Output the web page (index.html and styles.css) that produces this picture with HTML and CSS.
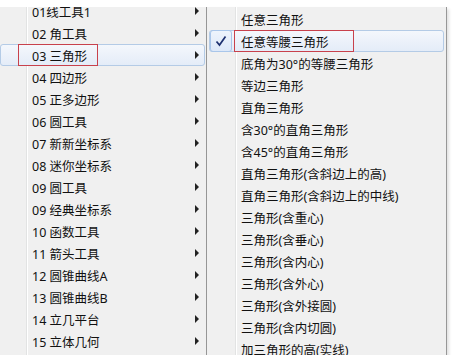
FILE: index.html
```html
<!DOCTYPE html>
<html lang="zh-CN">

<head>
    <meta charset="UTF-8">
    <meta name="viewport" content="width=device-width, initial-scale=1.0">
    <title>三角形菜单</title>
    <link rel="stylesheet" href="styles.css">
</head>

<body>
    <div class="screen">
        <div class="menu main-menu">
            <div class="item first"><span>01线工具1</span><i class="arrow"></i></div>
            <div class="item"><span>02 角工具</span><i class="arrow"></i></div>
            <div class="item active"><span>03 三角形</span><i class="arrow"></i><b class="mark mark-left"></b></div>
            <div class="item"><span>04 四边形</span><i class="arrow"></i></div>
            <div class="item"><span>05 正多边形</span><i class="arrow"></i></div>
            <div class="item"><span>06 圆工具</span><i class="arrow"></i></div>
            <div class="item"><span>07 新新坐标系</span><i class="arrow"></i></div>
            <div class="item"><span>08 迷你坐标系</span><i class="arrow"></i></div>
            <div class="item"><span>09 圆工具</span><i class="arrow"></i></div>
            <div class="item"><span>09 经典坐标系</span><i class="arrow"></i></div>
            <div class="item"><span>10 函数工具</span><i class="arrow"></i></div>
            <div class="item"><span>11 箭头工具</span><i class="arrow"></i></div>
            <div class="item"><span>12 圆锥曲线A</span><i class="arrow"></i></div>
            <div class="item"><span>13 圆锥曲线B</span><i class="arrow"></i></div>
            <div class="item"><span>14 立几平台</span><i class="arrow"></i></div>
            <div class="item"><span>15 立体几何</span><i class="arrow"></i></div>
        </div>

        <div class="menu sub-menu">
            <div class="item">任意三角形</div>
            <div class="item active">
                <span class="check">
                    <svg width="12" height="12" viewBox="0 0 12 12">
                        <path d="M1.5 6.5 L4.5 10 L10.5 1.5" fill="none" stroke="#1e3170" stroke-width="1.7" />
                    </svg>
                </span>
                任意等腰三角形
                <b class="mark mark-right"></b>
            </div>
            <div class="item">底角为30°的等腰三角形</div>
            <div class="item">等边三角形</div>
            <div class="item">直角三角形</div>
            <div class="item">含30°的直角三角形</div>
            <div class="item">含45°的直角三角形</div>
            <div class="item">直角三角形(含斜边上的高)</div>
            <div class="item">直角三角形(含斜边上的中线)</div>
            <div class="item">三角形(含重心)</div>
            <div class="item">三角形(含垂心)</div>
            <div class="item">三角形(含内心)</div>
            <div class="item">三角形(含外心)</div>
            <div class="item">三角形(含外接圆)</div>
            <div class="item">三角形(含内切圆)</div>
            <div class="item">加三角形的高(实线)</div>
        </div>
    </div>
</body>

</html>
```

FILE: styles.css
```css
body {
    margin: 0;
    background-color: #fff;
    font-family: "Noto Sans", "Noto Sans CJK SC", sans-serif;
    font-size: 12.5px;
    color: #111;
}

.screen {
    display: flex;
    align-items: flex-start;
    width: 455px;
    height: 355px;
    padding-top: 7px;
    box-sizing: border-box;
    overflow: hidden;
}

.menu {
    background-color: #f0f0f0;
    box-sizing: border-box;
}

.main-menu {
    width: 207px;
    height: 348px;
    overflow: hidden;
    border-right: 1px solid #979797;
    background-image: linear-gradient(to right, transparent 26px, #e2e3e3 26px, #e2e3e3 27px, #fff 27px, #fff 28px, transparent 28px);
}

.main-menu .item.first {
    margin-top: -7px;
}

.sub-menu {
    width: 240px;
    height: 360px;
    padding: 1px 2px 0 2px;
    border-right: 1px solid #979797;
    box-shadow: 2px 2px 3px rgba(0, 0, 0, 0.12);
    background-image: linear-gradient(to right, transparent 28px, #e2e3e3 28px, #e2e3e3 29px, #fff 29px, #fff 30px, transparent 30px);
}

.item {
    position: relative;
    display: flex;
    align-items: center;
    height: 22px;
    box-sizing: border-box;
    border: 1px solid transparent;
    border-radius: 3px;
    white-space: nowrap;
}

.main-menu .item {
    justify-content: space-between;
    margin-right: 1px;
    padding: 0 5px 0 31px;
}

.sub-menu .item {
    padding-left: 31px;
}

.item.active {
    border-color: #b4cbe6;
    background: linear-gradient(to bottom, #f4f7fc, #e4ecf8);
}

.arrow {
    width: 0;
    height: 0;
    border-left: 4px solid #222;
    border-top: 4px solid transparent;
    border-bottom: 4px solid transparent;
}

.check {
    position: absolute;
    left: 0;
    top: -1px;
    width: 22px;
    height: 22px;
    box-sizing: border-box;
    border: 1px solid #a9c6ea;
    border-radius: 3px;
    background: linear-gradient(to bottom, #eef4fc, #dde8f8);
    display: flex;
    align-items: center;
    justify-content: center;
}

.mark {
    position: absolute;
    top: -1px;
    height: 22px;
    box-sizing: border-box;
    border: 1px solid #c8414c;
}

.mark-left {
    left: 17px;
    width: 80px;
}

.mark-right {
    left: 24px;
    width: 120px;
}
```
